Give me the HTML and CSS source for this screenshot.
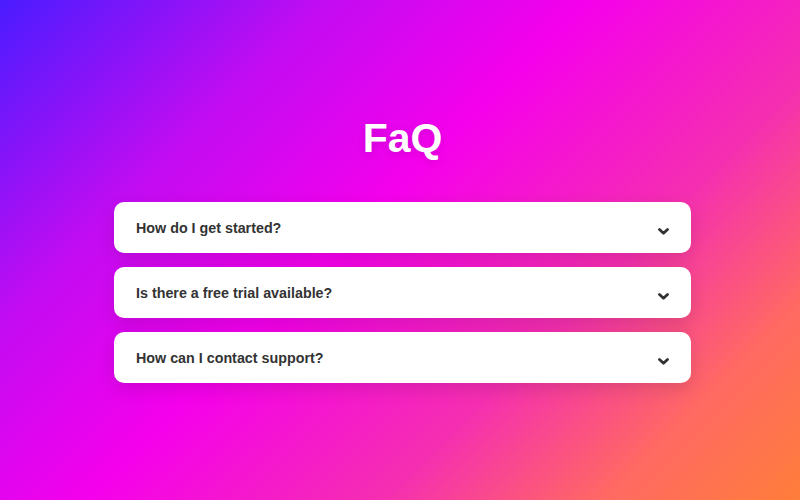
FILE: index.html
```html
<!DOCTYPE html>
<html lang="en">
<head>
<meta charset="UTF-8" />
<meta name="viewport" content="width=device-width, initial-scale=1" />
<title>FaQ</title>
<link rel="stylesheet" href="styles.css">
</head>
<body>

<main class="faq">
  <h1>FaQ</h1>

  <div class="faq-list">
    <div class="faq-item">
      <span class="question">How do I get started?</span>
      <svg class="chevron" viewBox="0 0 11 7" width="11" height="7"><polyline points="1.5,1.5 5.5,5.3 9.5,1.5" /></svg>
    </div>
    <div class="faq-item">
      <span class="question">Is there a free trial available?</span>
      <svg class="chevron" viewBox="0 0 11 7" width="11" height="7"><polyline points="1.5,1.5 5.5,5.3 9.5,1.5" /></svg>
    </div>
    <div class="faq-item">
      <span class="question">How can I contact support?</span>
      <svg class="chevron" viewBox="0 0 11 7" width="11" height="7"><polyline points="1.5,1.5 5.5,5.3 9.5,1.5" /></svg>
    </div>
  </div>
</main>

</body>
</html>
```

FILE: styles.css
```css
html, body {
  margin: 0;
  height: 100%;
}
body {
  font-family: "Liberation Sans", Arial, sans-serif;
  background: linear-gradient(135deg, #4a1cff 0%, #c20cf2 25%, #f500ec 45%, #f52fb0 68%, #ff6a62 85%, #ff7d3a 100%);
  overflow: hidden;
}
.faq {
  padding: 115px 0 0 5px;
  display: flex;
  flex-direction: column;
  align-items: center;
}
.faq h1 {
  margin: 0 0 41px;
  font-size: 41px;
  line-height: 46px;
  color: #fff;
  font-weight: 700;
  text-shadow: 0 2px 8px rgba(0, 0, 0, 0.12);
}
.faq-list {
  width: 577px;
  display: flex;
  flex-direction: column;
  gap: 14px;
}
.faq-item {
  height: 51px;
  background: #fff;
  border-radius: 10px;
  padding: 0 22px;
  display: flex;
  align-items: center;
  justify-content: space-between;
  box-shadow: 0 6px 18px rgba(0, 0, 0, 0.12);
  box-sizing: border-box;
}
.question {
  font-size: 14.3px;
  font-weight: 700;
  color: #333;
}
.chevron {
  margin-top: 7px;
}
.chevron polyline {
  fill: none;
  stroke: #333;
  stroke-width: 2.8;
  stroke-linecap: round;
  stroke-linejoin: round;
}
```
